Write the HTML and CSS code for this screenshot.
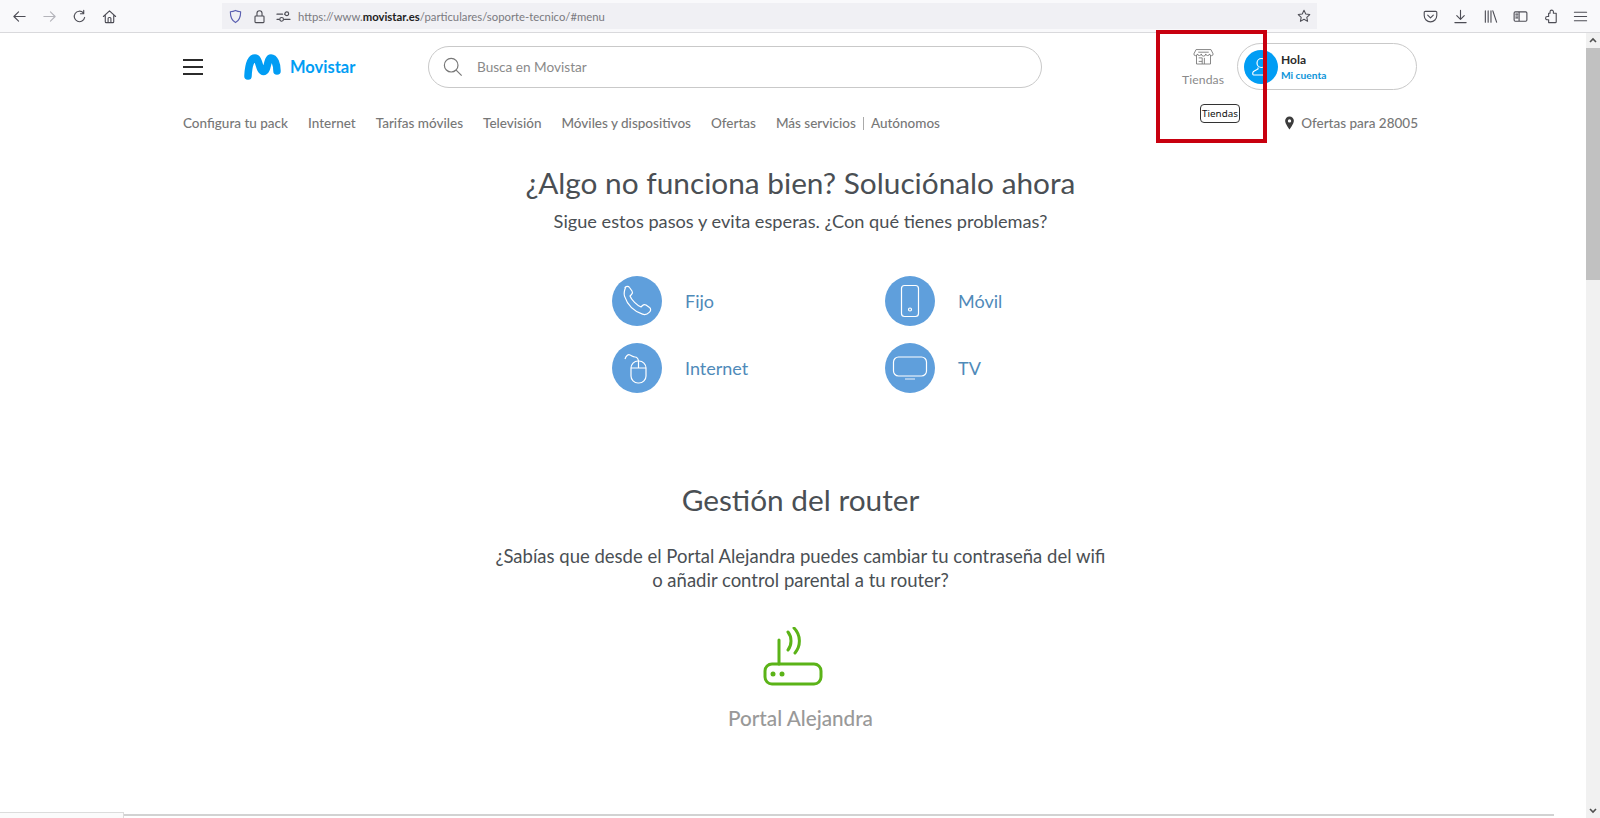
FILE: index.html
```html
<!DOCTYPE html>
<html lang="es">
<head>
    <meta charset="UTF-8">
    <title>Soporte técnico Movistar</title>
    <link rel="stylesheet" href="styles.css">
</head>
<body>
    <!-- Browser toolbar -->
    <div class="toolbar">
        <div class="tool"><svg viewBox="0 0 16 16"><path d="M14 8H2.500M7 3 2 8l5 5"/></svg></div>
        <div class="tool tool-off"><svg viewBox="0 0 16 16"><path d="M2 8h11.500M9 3l5 5-5 5"/></svg></div>
        <div class="tool"><svg viewBox="0 0 16 16"><path d="M13.500 9a5.600 5.600 0 1 1-1.500-5M12.500 1.500V5H9"/></svg></div>
        <div class="tool"><svg viewBox="0 0 16 16"><path d="M1.500 8 8 2l6.500 6M3.500 7v6.500a1 1 0 0 0 1 1h7a1 1 0 0 0 1-1V7M6.500 14.500V10a1 1 0 0 1 1-1h1a1 1 0 0 1 1 1v4.500"/></svg></div>
        <div class="urlbar">
            <svg class="url-icon shield" viewBox="0 0 16 16"><path d="M8 1.500c2 1 3.500 1.300 5.500 1.500 0 5-1.500 9.500-5.500 11.500C4 12.500 2.500 8 2.500 3 4.500 2.800 6 2.500 8 1.500Z"/></svg>
            <svg class="url-icon" viewBox="0 0 16 16"><path d="M4 7.500h8a.8.8 0 0 1 .8.8v5.400a.8.8 0 0 1-.8.8H4a.8.8 0 0 1-.8-.8V8.300a.8.8 0 0 1 .8-.8ZM5.300 7.500V4.500a2.700 2.700 0 0 1 5.400 0v3"/></svg>
            <svg class="url-icon" viewBox="0 0 16 16"><path d="M1 5.500h6M1 11h2.500M9 11h6M9 5.500h0"/><circle cx="11.500" cy="5" r="2"/><circle cx="6" cy="11" r="2"/></svg>
            <div class="url-text">https://www.<b>movistar.es</b>/particulares/soporte-tecnico/#menu</div>
            <svg class="url-star" viewBox="0 0 16 16"><path d="m8 1.500 2 4.200 4.600.6-3.400 3.200.9 4.600L8 11.800l-4.100 2.300.9-4.600L1.400 6.300 6 5.700Z"/></svg>
        </div>
        <div class="tools-right">
            <div class="tool"><svg viewBox="0 0 16 16"><path d="M2.500 2.500h11a1.200 1.200 0 0 1 1.200 1.200V7a6.700 6.700 0 0 1-13.400 0V3.700a1.200 1.200 0 0 1 1.200-1.200ZM5 6.500l3 3 3-3"/></svg></div>
            <div class="tool"><svg viewBox="0 0 16 16"><path d="M8 1.500v9M4 7l4 4 4-4M2 14.500h12"/></svg></div>
            <div class="tool"><svg viewBox="0 0 16 16"><path d="M2.500 2v12M5.500 2v12M8.500 2v12M10.500 2l4 12"/></svg></div>
            <div class="tool"><svg viewBox="0 0 16 16"><path d="M2.500 3h11a1.300 1.300 0 0 1 1.300 1.300v7.400a1.300 1.300 0 0 1-1.300 1.300h-11a1.300 1.300 0 0 1-1.300-1.300V4.300A1.300 1.300 0 0 1 2.500 3ZM6.500 3v10M3 5.500h2M3 7.500h2M3 9.500h2"/></svg></div>
            <div class="tool"><svg viewBox="0 0 16 16"><path d="M6 4.500h1.500V3a1.800 1.800 0 0 1 3.600 0v1.500h3v9a1 1 0 0 1-1 1H6v-3H4.500a1.700 1.700 0 0 1 0-3.500H6Z"/></svg></div>
            <div class="tool"><svg viewBox="0 0 16 16"><path d="M1.500 3.500h13M1.500 8h13M1.500 12.500h13"/></svg></div>
        </div>
    </div>

    <div class="window">
        <div class="page">
            <!-- Header -->
            <header class="head">
                <div class="head-top">
                    <div class="burger"><span></span><span></span><span></span></div>
                    <div class="logo">
                        <svg viewBox="0 0 37 26"><path class="logo-m" d="M4 22C4.500 11 7 4 11 4 15.500 4 15 17.500 19.500 17.500S23 4 27 4C30.500 4 33 10 33 17"/></svg>
                        <span>Movistar</span>
                    </div>
                    <div class="search">
                        <svg viewBox="0 0 22 22"><circle cx="9" cy="9" r="7.500"/><path d="m14.500 14.500 6 6"/></svg>
                        <span>Busca en Movistar</span>
                    </div>
                    <div class="stores">
                        <svg viewBox="0 0 24 20"><path d="M4 8v10h16V8M3.500 1.500h17L23 6.500a2 2 0 0 1-4 0 2.300 2.300 0 0 1-4.500 0 2.300 2.300 0 0 1-5 0 2.300 2.300 0 0 1-4.500 0 2 2 0 0 1-4 0ZM6 4.500h12M6.500 11h4v7M6.500 15h4M13 11v7"/></svg>
                        <span>Tiendas</span>
                    </div>
                    <div class="account">
                        <div class="avatar">
                            <svg viewBox="0 0 24 24"><circle cx="12.500" cy="8" r="4.500"/><path d="M9 12.500v1.500L4.500 16.500c-1 .6-1 3.500 0 3.500h12"/></svg>
                        </div>
                        <div class="account-text">
                            <div class="hello">Hola</div>
                            <div class="my-account">Mi cuenta</div>
                        </div>
                    </div>
                </div>
                <nav class="nav">
                    <a>Configura tu pack</a>
                    <a>Internet</a>
                    <a>Tarifas móviles</a>
                    <a>Televisión</a>
                    <a>Móviles y dispositivos</a>
                    <a>Ofertas</a>
                    <a class="nav-services">Más servicios</a>
                    <a class="nav-last">Autónomos</a>
                    <div class="offers">
                        <svg viewBox="0 0 12 16"><path fill-rule="evenodd" d="M6 .5a5 5 0 0 1 5 5c0 3.500-5 10-5 10S1 9 1 5.500a5 5 0 0 1 5-5Zm0 3.200a1.900 1.900 0 1 0 0 3.800 1.900 1.900 0 0 0 0-3.800Z"/></svg>
                        Ofertas para 28005
                    </div>
                </nav>
            </header>

            <!-- Support -->
            <section class="support">
                <h1>¿Algo no funciona bien? Soluciónalo ahora</h1>
                <p class="lead">Sigue estos pasos y evita esperas. ¿Con qué tienes problemas?</p>
                <div class="topics">
                    <a class="topic">
                        <span class="topic-icon"><svg viewBox="0 0 50 50"><path d="M13 11.500c1.500-1.500 3.500-1.500 4.500 0l2.500 3.500c.8 1.200.5 2.500-.5 3.500l-1.500 1.500c1.500 4 7 9.500 11 11l1.500-1.500c1-1 2.300-1.200 3.500-.4l3.500 2.500c1.500 1 1.500 3 0 4.500-2 2-4.500 3-7 2-9-3-15-9-18-18-.8-2.500 0-6 1-8.600Z"/></svg></span>
                        Fijo
                    </a>
                    <a class="topic">
                        <span class="topic-icon"><svg viewBox="0 0 50 50"><rect x="16.500" y="9.500" width="17" height="31" rx="3"/><circle cx="25" cy="33.500" r="1.500"/></svg></span>
                        Móvil
                    </a>
                    <a class="topic">
                        <span class="topic-icon"><svg viewBox="0 0 50 50"><rect x="19" y="18" width="15" height="22" rx="7"/><path d="M19 25h15M26.500 18v7M13 16c1-3 3-5 5-4s3 2 5 2 3 1 3.500 4"/></svg></span>
                        Internet
                    </a>
                    <a class="topic">
                        <span class="topic-icon"><svg viewBox="0 0 50 50"><rect x="8.500" y="14" width="33" height="19" rx="5"/><path class="tv-foot" d="M20 36h10"/></svg></span>
                        TV
                    </a>
                </div>
            </section>

            <!-- Router -->
            <section class="router">
                <h2>Gestión del router</h2>
                <p class="router-text">¿Sabías que desde el Portal Alejandra puedes cambiar tu contraseña del wifi<br>o añadir control parental a tu router?</p>
                <svg class="router-icon" viewBox="0 0 60 60"><path d="M16 37V13M25 5c4 5 4 13 0 18M31 1c7 7 7 18 1 25"/><rect x="2" y="37" width="56" height="20" rx="7"/><circle class="dot" cx="10" cy="47" r="2.500"/><circle class="dot" cx="19" cy="47" r="2.500"/></svg>
                <div class="router-name">Portal Alejandra</div>
            </section>

            <div class="status-tab"></div>
            <div class="status-line"></div>
        </div>

        <div class="scrollbar">
            <svg class="arrow" viewBox="0 0 10 10"><path d="m2 6.500 3-3 3 3"/></svg>
            <div class="thumb"></div>
            <svg class="arrow arrow-down" viewBox="0 0 10 10"><path d="m2 3.500 3 3 3-3"/></svg>
        </div>
    </div>

    <!-- Annotation on top of the screenshot -->
    <div class="tooltip">Tiendas</div>
    <div class="red-box"></div>
</body>
</html>
```

FILE: styles.css
```css
* {
    box-sizing: border-box;
}
html, body {
    height: 100%;
}
body {
    margin: 0;
    overflow: hidden;
    background: #fff;
    font-family: Lato, "Liberation Sans", sans-serif;
    color: #4a4f54;
}

/* toolbar */
.toolbar {
    display: flex;
    align-items: center;
    height: 33px;
    padding: 0 5px 0 4px;
    background: #f9f9fb;
    border-bottom: 1px solid #d9d9dc;
}
.tool {
    display: flex;
    align-items: center;
    justify-content: center;
    width: 30px;
    height: 30px;
}
.tool svg, .url-icon, .url-star {
    width: 15px;
    height: 15px;
    fill: none;
    stroke: #4d4d55;
    stroke-width: 1.200;
    stroke-linejoin: round;
    stroke-linecap: round;
}
.tool-off svg {
    stroke: #b4b4ba;
}
.urlbar {
    display: flex;
    align-items: center;
    width: 1095px;
    height: 26px;
    margin-left: 98px;
    padding: 0 5px 0 6px;
    background: #f0f0f4;
}
.url-icon {
    margin-right: 9px;
}
.url-icon:nth-of-type(3) {
    margin-right: 7px;
}
.shield {
    stroke: #5a5fb0;
}
.url-text {
    font-size: 11.300px;
    color: #7a7a80;
}
.url-text b {
    font-weight: 700;
    color: #222;
}
.url-star {
    margin-left: auto;
    margin-right: 1px;
    width: 14px;
    height: 14px;
}
.tools-right {
    display: flex;
    margin-left: auto;
}

/* page */
.window {
    display: flex;
    height: 785px;
}
.page {
    position: relative;
    flex: 1;
    padding: 0 168px 0 183px;
    overflow: hidden;
}
.scrollbar {
    display: flex;
    flex-direction: column;
    align-items: center;
    width: 14px;
    background: #f1f1f1;
}
.arrow {
    width: 10px;
    height: 15px;
    fill: none;
    stroke: #505050;
    stroke-width: 1.600;
}
.thumb {
    width: 14px;
    height: 232px;
    background: #c1c1c1;
}
.arrow-down {
    margin-top: auto;
}

/* header */
.head-top {
    display: flex;
    align-items: flex-start;
    height: 70px;
}
.burger {
    display: flex;
    flex-direction: column;
    gap: 5px;
    width: 20px;
    margin-top: 26px;
}
.burger span {
    height: 2px;
    background: #2b2b2b;
}
.logo {
    display: flex;
    align-items: center;
    width: 184px;
    margin: 21px 0 0 41px;
    font-size: 16.500px;
    font-weight: 700;
    color: #019df4;
}
.logo svg {
    width: 37px;
    height: 26px;
    margin-right: 9px;
}
.logo-m {
    fill: none;
    stroke: #019df4;
    stroke-width: 7.500;
    stroke-linecap: round;
}
.search {
    display: flex;
    align-items: center;
    width: 614px;
    height: 42px;
    margin-top: 13px;
    padding-left: 14px;
    border: 1px solid #c9c9c9;
    border-radius: 21px;
    font-size: 13.600px;
    color: #8a8a8a;
}
.search svg {
    width: 20px;
    height: 20px;
    margin-right: 14px;
    fill: none;
    stroke: #777;
    stroke-width: 1.300;
}
.stores {
    display: flex;
    flex-direction: column;
    align-items: center;
    width: 60px;
    margin: 15px 0 0 131px;
    font-size: 12.200px;
    letter-spacing: .1px;
    color: #8a8a8a;
}
.stores svg {
    width: 21px;
    height: 18px;
    margin-bottom: 6px;
    fill: none;
    stroke: #777;
    stroke-width: 1;
}
.account {
    display: flex;
    align-items: center;
    width: 180px;
    height: 47px;
    margin: 10px 0 0 4px;
    padding-left: 6px;
    border: 1px solid #c9c9c9;
    border-radius: 24px;
}
.avatar {
    display: flex;
    align-items: center;
    justify-content: center;
    width: 34px;
    height: 34px;
    margin-right: 3px;
    border-radius: 50%;
    background: #019df4;
}
.avatar svg {
    width: 24px;
    height: 24px;
    fill: none;
    stroke: #fff;
    stroke-width: 1.200;
}
.account-text {
    padding-top: 1px;
}
.hello {
    font-size: 12px;
    font-weight: 700;
    line-height: 16px;
    color: #2b2b2b;
}
.my-account {
    font-size: 10.200px;
    font-weight: 700;
    line-height: 14px;
    color: #0b94d9;
}
.nav {
    display: flex;
    align-items: center;
    gap: 20px;
    height: 40px;
    font-size: 13.500px;
    font-weight: 500;
    color: #777;
}
.nav-services {
    margin-right: -20px;
    padding-right: 7px;
}
.nav-last {
    padding-left: 7px;
    border-left: 1px solid #aaa;
    line-height: 13px;
}
.offers {
    display: flex;
    align-items: center;
    margin-left: auto;
}
.offers svg {
    width: 11px;
    height: 14px;
    margin-right: 6px;
    fill: #3c3c3c;
}

/* support */
.support {
    text-align: center;
}
h1, h2 {
    margin: 0;
    font-size: 29.800px;
    font-weight: 400;
    line-height: 40px;
}
.support h1 {
    margin-top: 20px;
}
.lead {
    margin: 7px 0 0;
    font-size: 18.200px;
    line-height: 22px;
}
.topics {
    display: grid;
    grid-template-columns: 273px 150px;
    grid-auto-rows: 50px;
    row-gap: 17px;
    justify-content: start;
    margin: 44px 0 0 429px;
    text-align: left;
}
.topic {
    display: flex;
    align-items: center;
    font-size: 18px;
    color: #4f8ab9;
}
.topic-icon {
    width: 50px;
    height: 50px;
    margin-right: 23px;
    border-radius: 50%;
    background: #5f9fdc;
}
.topic-icon svg {
    display: block;
    width: 50px;
    height: 50px;
    fill: none;
    stroke: #fff;
    stroke-width: 1.200;
    stroke-linejoin: round;
}
.tv-foot {
    stroke: #bcd6f0;
    stroke-width: 1.500;
}

/* router */
.router {
    text-align: center;
}
.router h2 {
    margin-top: 87px;
}
.router-text {
    margin: 24px 0 0;
    font-size: 18.500px;
    line-height: 24px;
}
.router-icon {
    display: block;
    width: 60px;
    height: 60px;
    margin: 35px 0 0 calc(50% - 38px);
    fill: none;
    stroke: #5bb318;
    stroke-width: 3;
    stroke-linecap: round;
}
.router-icon .dot {
    fill: #5bb318;
    stroke: none;
}
.router-name {
    margin-top: 19px;
    font-size: 20.700px;
    font-weight: 500;
    color: #999;
}

/* bottom edge of the capture */
.status-line {
    position: absolute;
    left: 124px;
    right: 32px;
    bottom: 2px;
    height: 2px;
    background: #d2d2d2;
}
.status-tab {
    position: absolute;
    left: 0;
    bottom: 0;
    width: 124px;
    height: 6px;
    border-top: 1px solid #dcdcdc;
    border-right: 1px solid #dcdcdc;
    background: #fbfbfb;
}

/* annotation */
.red-box {
    position: absolute;
    left: 1156px;
    top: 30px;
    width: 111px;
    height: 113px;
    border: 4px solid #c8000f;
}
.tooltip {
    position: absolute;
    left: 1200px;
    top: 104px;
    width: 40px;
    height: 19px;
    border: 1px solid #333;
    border-radius: 4px;
    background: #fff;
    font-family: "Noto Sans", sans-serif;
    font-size: 9.800px;
    line-height: 17px;
    text-align: center;
    color: #111;
}
```
